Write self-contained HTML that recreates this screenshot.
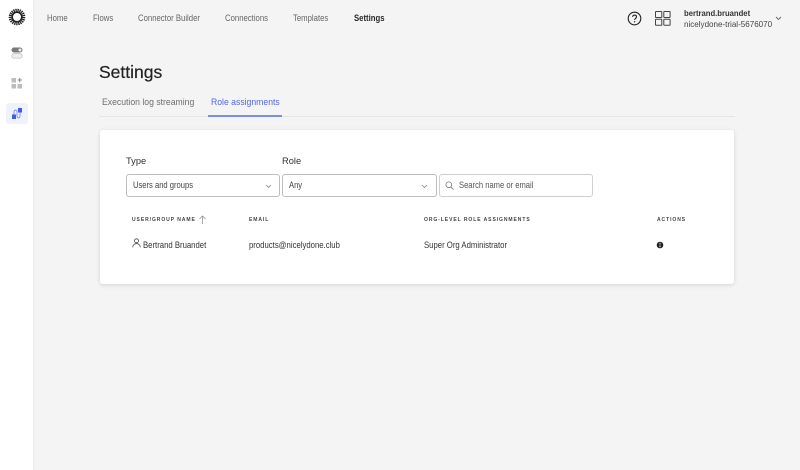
<!DOCTYPE html>
<html><head><meta charset="utf-8">
<style>
*{box-sizing:border-box}
html,body{margin:0;padding:0}
body{width:800px;height:470px;overflow:hidden;background:#f4f4f4;font-family:"Liberation Sans",sans-serif;position:relative;color:#333}
.a{position:absolute;white-space:nowrap;transform-origin:0 50%}
.nav{top:13px;font-size:9px;line-height:11px;color:#666;transform:scaleX(.86)}
.th{font-size:5.4px;font-weight:bold;letter-spacing:1px;color:#444;line-height:8px;transform:scaleX(.93)}
.td{font-size:9px;line-height:11px;color:#333;top:239.5px;transform:scaleX(.86)}
.box{height:23px;border:1px solid #bdbdbd;border-radius:3px;background:#fff;top:174px}
.tab{top:96px;font-size:9.3px;line-height:12px;transform:scaleX(.93)}
.in{top:180px;font-size:9px;line-height:11px;color:#444;transform:scaleX(.845)}
</style></head><body>
<div class="a" style="left:0;top:0;width:34px;height:470px;background:#fff;border-right:1px solid #ececec"></div>
<svg class="a" style="left:8px;top:8px" width="18" height="18" viewBox="0 0 18 18"><circle cx="9" cy="9" r="6.4" fill="none" stroke="#222" stroke-width="3.8" stroke-dasharray="1.2 .7"/><circle cx="9" cy="9" r="4.8" fill="none" stroke="#222" stroke-width="1.6"/></svg>
<svg class="a" style="left:11px;top:47px" width="12" height="12" viewBox="0 0 12 12"><rect x=".5" y=".5" width="11" height="5" rx="2.5" fill="#7a7a7a"/><circle cx="9" cy="3" r="1.5" fill="#eee"/><rect x=".8" y="6.6" width="10.4" height="4.6" rx="2.3" fill="#eee" stroke="#bbb" stroke-width=".7"/></svg>
<svg class="a" style="left:11px;top:77px" width="12" height="12" viewBox="0 0 12 12"><rect x=".5" y="1" width="4.5" height="4.5" fill="#bdbdbd"/><rect x=".5" y="7" width="4.5" height="4.5" fill="#bdbdbd"/><rect x="6.500" y="7" width="4.500" height="4.500" fill="#bdbdbd"/><path d="M8.700 .8v4.400M6.500 3h4.400" stroke="#888" stroke-width="1"/></svg>
<div class="a" style="left:6px;top:103px;width:22px;height:21px;background:#eff1fd;border-radius:3px"></div>
<svg class="a" style="left:11px;top:108px" width="12" height="12" viewBox="0 0 12 12"><rect x="1" y="6.500" width="4" height="4.500" fill="#3f5fe0"/><rect x="7" y="0" width="4" height="4.500" fill="#3f5fe0"/><path d="M3 6.500V4c0-2.500 3-2.500 3 0v4c0 2.500 3 2.500 3 0V4.500" fill="none" stroke="#7a8ee8" stroke-width=".9"/></svg>

<div class="a nav" style="left:47px">Home</div>
<div class="a nav" style="left:93px">Flows</div>
<div class="a nav" style="left:137.500px">Connector Builder</div>
<div class="a nav" style="left:225px">Connections</div>
<div class="a nav" style="left:293px">Templates</div>
<div class="a nav" style="left:353.500px;font-weight:bold;color:#2a2a2a">Settings</div>

<svg class="a" style="left:627px;top:11px" width="15" height="15" viewBox="0 0 15 15"><circle cx="7.500" cy="7.500" r="6.300" fill="none" stroke="#222" stroke-width="1.100"/><path d="M5.600 5.900c0-2.500 3.900-2.500 3.900 0 0 1.500-1.900 1.500-1.900 3" fill="none" stroke="#222" stroke-width="1.100"/><circle cx="7.600" cy="10.800" r=".7" fill="#222"/></svg>
<svg class="a" style="left:655px;top:11px" width="16" height="15" viewBox="0 0 16 15"><g fill="none" stroke="#444" stroke-width="1"><rect x=".5" y=".5" width="6.300" height="6" rx=".5"/><rect x="8.800" y=".5" width="6.300" height="6" rx=".5"/><rect x=".5" y="8.300" width="6.300" height="6" rx=".5"/><rect x="8.800" y="8.300" width="6.300" height="6" rx=".5"/></g></svg>
<div class="a" style="left:684px;top:8px;font-size:8.400px;line-height:11px;font-weight:bold;color:#333;transform:scaleX(.917)">bertrand.bruandet</div>
<div class="a" style="left:684px;top:19px;font-size:8.600px;line-height:11px;color:#444;transform:scaleX(.936)">nicelydone-trial-5676070</div>
<svg class="a" style="left:775px;top:16px" width="7" height="5" viewBox="0 0 7 5"><path d="M1 1l2.500 2.500L6 1" fill="none" stroke="#666" stroke-width=".9"/></svg>

<div class="a" style="left:99px;top:62px;font-size:17.500px;line-height:20px;color:#222;-webkit-text-stroke:.2px #222">Settings</div>
<div class="a tab" style="left:102px;color:#6e6e6e">Execution log streaming</div>
<div class="a tab" style="left:211px;color:#5468e0">Role assignments</div>
<div class="a" style="left:99px;top:116px;width:636px;height:1px;background:#e6e6e6"></div>
<div class="a" style="left:208px;top:115px;width:74px;height:2px;background:#7c8ce8"></div>

<div class="a" style="left:100px;top:130px;width:634px;height:154px;background:#fff;border-radius:3px;box-shadow:0 1px 4px rgba(0,0,0,.14)"></div>

<div class="a" style="left:126px;top:155px;font-size:9.300px;line-height:12px;color:#333">Type</div>
<div class="a" style="left:282px;top:155px;font-size:9.300px;line-height:12px;color:#333">Role</div>

<div class="a box" style="left:126px;width:154px"></div>
<div class="a in" style="left:133px">Users and groups</div>
<svg class="a" style="left:265px;top:184px" width="7" height="5" viewBox="0 0 7 5"><path d="M1 1l2.500 2.500L6 1" fill="none" stroke="#888" stroke-width=".8"/></svg>
<div class="a box" style="left:282px;width:155px"></div>
<div class="a in" style="left:289px">Any</div>
<svg class="a" style="left:421px;top:184px" width="7" height="5" viewBox="0 0 7 5"><path d="M1 1l2.500 2.500L6 1" fill="none" stroke="#888" stroke-width=".8"/></svg>
<div class="a box" style="left:439px;width:154px;border-color:#cfcfcf"></div>
<svg class="a" style="left:445px;top:181px" width="9" height="9" viewBox="0 0 9 9"><circle cx="3.800" cy="3.800" r="2.900" fill="none" stroke="#777" stroke-width=".8"/><path d="M6 6l2.500 2.500" stroke="#777" stroke-width=".8"/></svg>
<div class="a in" style="left:459px;color:#555">Search name or email</div>

<div class="a th" style="left:132px;top:216px">USER/GROUP NAME</div>
<svg class="a" style="left:198px;top:215px" width="9" height="10" viewBox="0 0 9 10"><path d="M4.500 9V1M1.500 4l3-3 3 3" fill="none" stroke="#888" stroke-width=".7"/></svg>
<div class="a th" style="left:249px;top:216px">EMAIL</div>
<div class="a th" style="left:423.500px;top:216px">ORG-LEVEL ROLE ASSIGNMENTS</div>
<div class="a th" style="left:657px;top:215.500px">ACTIONS</div>

<svg class="a" style="left:132px;top:238px" width="9" height="10" viewBox="0 0 9 10"><circle cx="4.500" cy="2.800" r="2" fill="none" stroke="#444" stroke-width=".8"/><path d="M.7 9.300c.4-5 7.200-5 7.600 0" fill="none" stroke="#444" stroke-width=".8"/></svg>
<div class="a td" style="left:143px">Bertrand Bruandet</div>
<div class="a td" style="left:248.500px">products@nicelydone.club</div>
<div class="a td" style="left:423.500px">Super Org Administrator</div>
<svg class="a" style="left:656px;top:241px" width="8" height="8" viewBox="0 0 8 8"><circle cx="4" cy="4" r="3.300" fill="#222"/><circle cx="4" cy="2.400" r=".6" fill="#ddd"/><circle cx="4" cy="4" r=".6" fill="#ddd"/><circle cx="4" cy="5.600" r=".6" fill="#ddd"/></svg>
</body></html>
